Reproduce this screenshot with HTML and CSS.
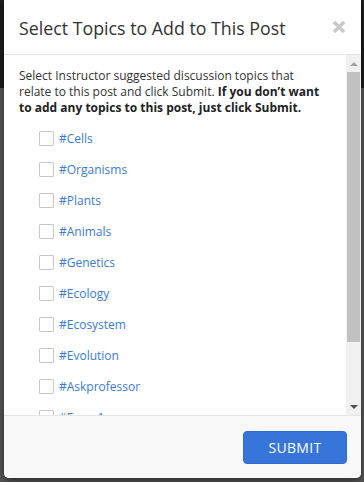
FILE: index.html
```html
<!DOCTYPE html>
<html>
<head>
<meta charset="utf-8">
<link rel="stylesheet" href="styles.css">
</head>
<body>
<div class="modal">
  <div class="modal-header">
    <h2 class="modal-title">Select Topics to Add to This Post</h2>
    <span class="close" aria-label="Close">
      <svg width="14" height="14" viewBox="0 0 14 14"><path d="M2 2 L12 12 M12 2 L2 12" stroke="#c9c9c9" stroke-width="3.6" stroke-linecap="butt"/></svg>
    </span>
  </div>
  <div class="modal-body">
    <div class="body-content">
      <p class="intro">Select Instructor suggested discussion topics that relate to this post and click Submit. <strong>If you don’t want to add any topics to this post, just click Submit.</strong></p>
      <ul class="topics">
        <li><span class="box"></span><span class="label">#Cells</span></li>
        <li><span class="box"></span><span class="label">#Organisms</span></li>
        <li><span class="box"></span><span class="label">#Plants</span></li>
        <li><span class="box"></span><span class="label">#Animals</span></li>
        <li><span class="box"></span><span class="label">#Genetics</span></li>
        <li><span class="box"></span><span class="label">#Ecology</span></li>
        <li><span class="box"></span><span class="label">#Ecosystem</span></li>
        <li><span class="box"></span><span class="label">#Evolution</span></li>
        <li><span class="box"></span><span class="label">#Askprofessor</span></li>
        <li><span class="box"></span><span class="label">#Exam1</span></li>
        <li><span class="box"></span><span class="label">#Exam2</span></li>
      </ul>
    </div>
    <div class="scrollbar">
      <span class="arrow up"></span>
      <div class="track"><div class="thumb"></div></div>
      <span class="arrow down"></span>
    </div>
  </div>
  <div class="modal-footer">
    <button class="submit">SUBMIT</button>
  </div>
</div>
</body>
</html>
```
FILE: styles.css
```css
html, body {
  margin: 0;
  padding: 0;
  height: 100%;
}
body {
  background: linear-gradient(#1c1c1c 0, #1c1c1c 88px, #575757 88px);
  font-family: "Open Sans", "Liberation Sans", sans-serif;
  overflow: hidden;
}
.modal {
  margin-left: 4px;
  width: 357px;
  height: 478px;
  background: #fff;
  border-radius: 0 0 5px 5px;
  box-shadow: 0 3px 9px rgba(0,0,0,0.5);
  display: flex;
  flex-direction: column;
  overflow: hidden;
}
.modal-header {
  height: 54px;
  flex: none;
  border-bottom: 1px solid #e5e5e5;
  display: flex;
  align-items: center;
  justify-content: space-between;
  padding: 0 15px;
}
.modal-title {
  margin: 0;
  font-size: 17.8px;
  font-weight: 400;
  color: #333;
  line-height: 20px;
  padding-top: 1px;
}
.close {
  display: flex;
  width: 14px;
  height: 14px;
  margin-top: -1px;
}
.modal-body {
  height: 360px;
  flex: none;
  display: flex;
  overflow: hidden;
}
.body-content {
  flex: 1;
  overflow: hidden;
  padding: 13px 15px 0 15px;
}
.intro {
  margin: 0;
  padding-right: 8px;
  font-size: 12px;
  line-height: 16px;
  color: #333;
}
.intro strong {
  font-weight: 700;
  color: #222;
}
.topics {
  list-style: none;
  margin: 7px 0 0 0;
  padding: 0 0 0 20px;
}
.topics li {
  display: flex;
  align-items: center;
  gap: 5px;
  height: 31px;
}
.box {
  width: 13px;
  height: 13px;
  border: 1px solid #c8c8c8;
  border-radius: 1px;
  background: #fff;
  flex: none;
}
.label {
  font-size: 12px;
  color: #3a7bd8;
}
.scrollbar {
  width: 15px;
  flex: none;
  background: #f1f1f1;
  display: flex;
  flex-direction: column;
  align-items: center;
}
.arrow {
  width: 15px;
  height: 17px;
  flex: none;
  display: flex;
  align-items: center;
  justify-content: center;
}
.arrow::before {
  content: "";
  width: 0;
  height: 0;
  border-left: 4px solid transparent;
  border-right: 4px solid transparent;
}
.arrow.up::before {
  border-bottom: 4px solid #a3a3a3;
}
.arrow.down::before {
  border-top: 4px solid #505050;
}
.track {
  flex: 1;
  width: 15px;
  display: flex;
  justify-content: center;
}
.thumb {
  width: 13px;
  height: 270px;
  background: #c1c1c1;
}
.modal-footer {
  flex: 1;
  border-top: 1px solid #e5e5e5;
  background: #f9f9f9;
  display: flex;
  justify-content: flex-end;
  align-items: flex-start;
  padding: 15px 14px 0 0;
}
.submit {
  width: 104px;
  height: 33px;
  border: 1px solid #2f6bd0;
  border-radius: 4px;
  background: #3875d9;
  color: #fff;
  font-family: "Open Sans", "Liberation Sans", sans-serif;
  font-size: 14px;
  font-weight: 400;
  letter-spacing: 0.3px;
  padding: 0;
}
```
